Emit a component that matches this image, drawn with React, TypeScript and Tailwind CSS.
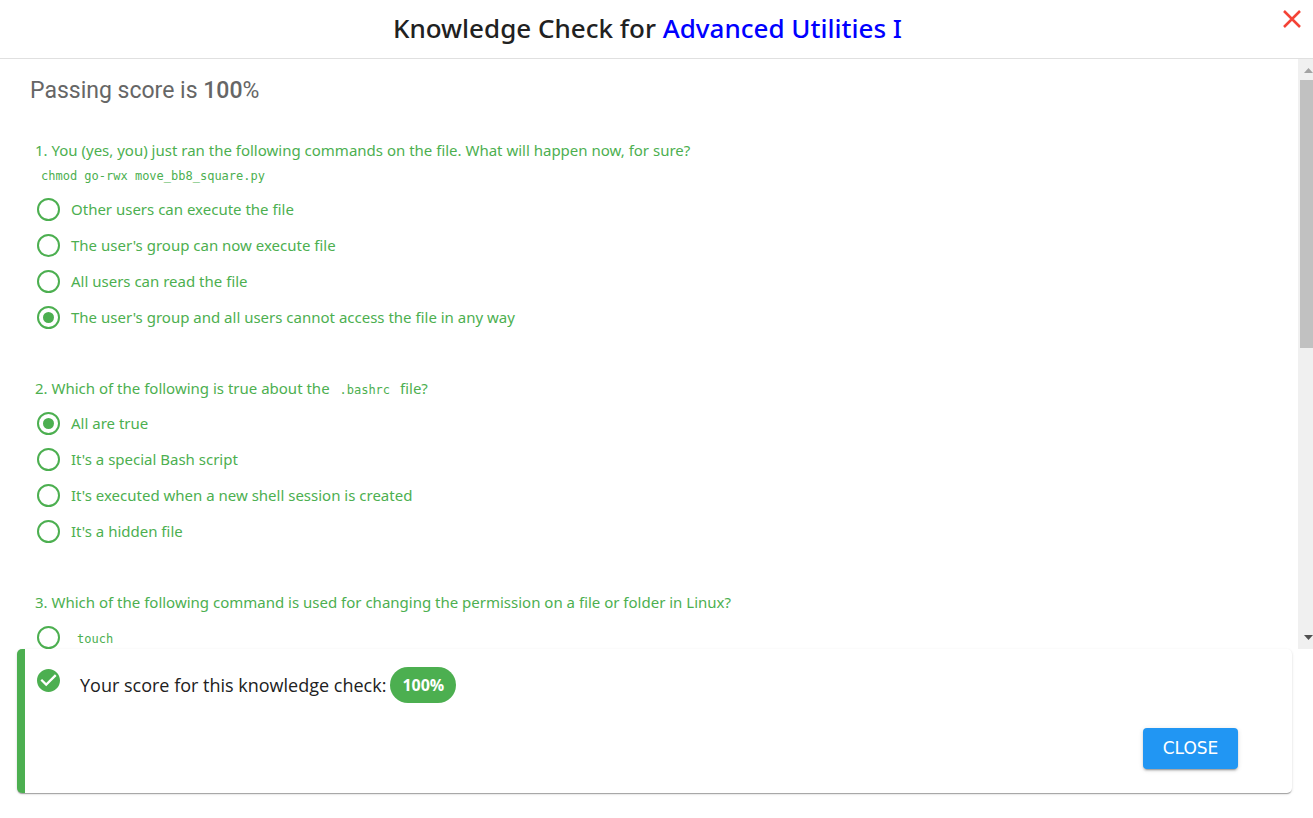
import { ReactNode } from "react";

type Option = { label: ReactNode; checked?: boolean };
type Question = { title: ReactNode; code?: string; options: Option[] };

function Code({ children }: { children: ReactNode }) {
  return (
    <code className="px-1.5 font-['DejaVu_Sans_Mono',monospace] text-[12px] leading-none">{children}</code>
  );
}

const questions: Question[] = [
  {
    title: "1. You (yes, you) just ran the following commands on the file. What will happen now, for sure?",
    code: "chmod go-rwx move_bb8_square.py",
    options: [
      { label: "Other users can execute the file" },
      { label: "The user's group can now execute file" },
      { label: "All users can read the file" },
      { label: "The user's group and all users cannot access the file in any way", checked: true },
    ],
  },
  {
    title: (
      <>
        2. Which of the following is true about the <Code>.bashrc</Code> file?
      </>
    ),
    options: [
      { label: "All are true", checked: true },
      { label: "It's a special Bash script" },
      { label: "It's executed when a new shell session is created" },
      { label: "It's a hidden file" },
    ],
  },
  {
    title: "3. Which of the following command is used for changing the permission on a file or folder in Linux?",
    options: [{ label: <Code>touch</Code> }],
  },
];

function QuestionBlock({ question, index }: { question: Question; index: number }) {
  return (
    <fieldset className="text-[15px] leading-6 text-[#4caf50]">
      <legend className="px-[5px]">
        {question.title}
        {question.code && (
          <span className="block">
            <Code>{question.code}</Code>
          </span>
        )}
      </legend>
      <div className="pt-[5px] pl-[7px]">
        {question.options.map((option, i) => (
          <label key={i} className="flex h-9 items-center gap-[11px]">
            <input
              type="radio"
              name={`question-${index}`}
              defaultChecked={option.checked}
              className="grid size-[23px] shrink-0 appearance-none place-items-center rounded-full border-2 border-[#4caf50] before:size-[11px] before:rounded-full checked:before:bg-[#4caf50]"
            />
            <span>{option.label}</span>
          </label>
        ))}
      </div>
    </fieldset>
  );
}

function Scrollbar() {
  return (
    <div aria-hidden="true" className="flex w-[15px] shrink-0 flex-col overflow-hidden bg-[#f0f0f0] pl-0.5">
      <svg className="h-[21px] w-[17px] shrink-0" viewBox="0 0 17 21">
        <path d="M4 14L8.500 9L13 14Z" fill="#a3a3a3" />
      </svg>
      <div className="h-[268px] bg-[#c1c1c1]" />
      <svg className="mt-auto h-[21px] w-[17px] shrink-0" viewBox="0 0 17 21">
        <path d="M4 7L8.500 12L13 7Z" fill="#505050" />
      </svg>
    </div>
  );
}

export default function App() {
  return (
    <div className="flex h-screen flex-col bg-white pb-[25px] font-['Noto_Sans',sans-serif] text-[#212121]">
      <header className="flex h-[59px] shrink-0 items-center border-b border-[#e0e0e0] pl-6">
        <h1 className="flex-1 pb-0.5 text-center text-[26px] leading-9 font-medium">
          Knowledge Check for{" "}
          <a href="#advanced-utilities" className="text-[#0000ff]">
            Advanced Utilities I
          </a>
        </h1>
        <button type="button" aria-label="Close dialog" className="flex h-[38px] w-[42px] items-center justify-center self-start">
          <svg className="size-[18px]" viewBox="0 0 18 18" fill="none" stroke="#f44336" strokeWidth="2.500">
            <path d="M1 1L17 17M17 1L1 17" />
          </svg>
        </button>
      </header>

      <div className="flex min-h-0 flex-1">
        <main className="min-w-0 flex-1 overflow-hidden pt-4 pl-[30px]">
          <h2 className="font-[Roboto,sans-serif] text-[23px] leading-8 text-[#666666]">
            Passing score is <span className="font-medium">100</span>%
          </h2>
          <form className="mt-[31px] flex flex-col gap-[41px]">
            {questions.map((question, i) => (
              <QuestionBlock key={i} question={question} index={i + 1} />
            ))}
          </form>
        </main>
        <Scrollbar />
      </div>

      <section className="mr-[21px] ml-[17px] shrink-0 rounded-[5px] border-l-8 border-[#4caf50] bg-white pt-[18px] pr-[54px] pb-6 pl-3 shadow-[0_2px_1px_-1px_rgba(0,0,0,0.2),0_1px_1px_0_rgba(0,0,0,0.14),0_1px_3px_0_rgba(0,0,0,0.12)]">
        <div className="flex items-center">
          <svg className="mt-0.5 size-[23px] shrink-0 self-start" viewBox="2 2 20 20" fill="#4caf50" aria-hidden="true">
            <path d="M12 2C6.500 2 2 6.500 2 12S6.500 22 12 22 22 17.500 22 12 17.500 2 12 2M10 17L5 12L6.410 10.590L10 14.170L17.590 6.580L19 8L10 17Z" />
          </svg>
          <p className="flex items-center gap-1 pl-5 font-['Open_Sans',sans-serif] text-[18px] leading-6">
            Your score for this knowledge check:
            <strong className="flex h-9 items-center rounded-full bg-[#4caf50] px-3 text-[16px] font-bold text-white">
              100%
            </strong>
          </p>
        </div>
        <div className="mt-[25px] flex justify-end">
          <button
            type="button"
            className="h-[41px] w-[95px] rounded bg-[#2196f3] pb-0.5 font-['DejaVu_Sans',sans-serif] text-[17px] leading-6 text-white shadow-[0_3px_1px_-2px_rgba(0,0,0,0.2),0_2px_2px_0_rgba(0,0,0,0.14),0_1px_5px_0_rgba(0,0,0,0.12)]"
          >
            CLOSE
          </button>
        </div>
      </section>
    </div>
  );
}
